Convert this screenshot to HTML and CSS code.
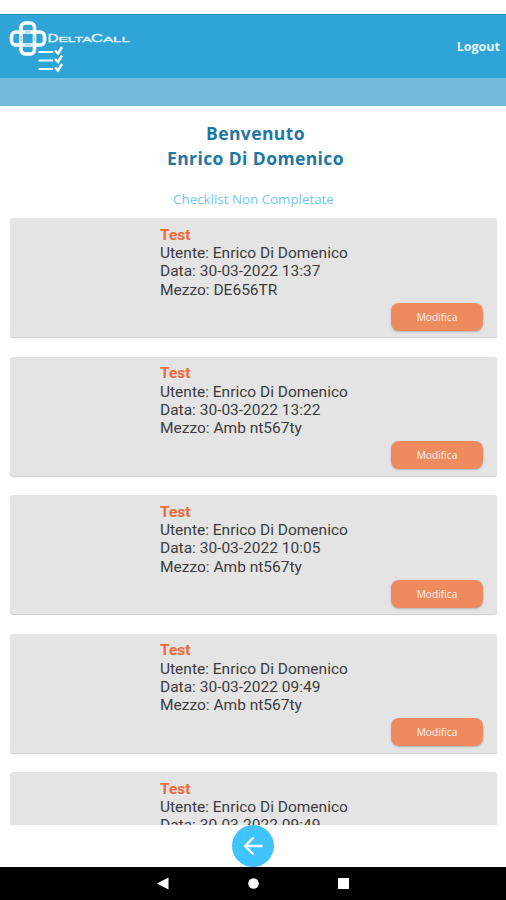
FILE: index.html
```html
<!DOCTYPE html>
<html lang="it">
<head>
<meta charset="utf-8">
<meta name="viewport" content="width=device-width">
<title>DeltaCall</title>
<link rel="stylesheet" href="styles.css">
</head>
<body>
<div class="app">
  <header class="header">
    <svg class="logo" width="126" height="58" viewBox="0 0 126 58" fill="none" stroke="#fff">
      <g stroke-width="3.6">
        <rect x="13" y="6" width="13.500" height="31" rx="4.5"/>
        <rect x="3.500" y="15" width="33" height="13" rx="4.5"/>
      </g>
      <path d="M17 15h5.500M17 28h5.500M13 19v5M26.500 19v5" stroke="#a5d6ee" stroke-width="1.500"/>
      <g class="logo-text" fill="#e4f4fc" stroke="#e4f4fc" stroke-width=".3">
        <text x="39.500" y="24.500" font-size="10" textLength="11" lengthAdjust="spacingAndGlyphs">D</text>
        <text x="50.500" y="24.500" font-size="8" textLength="33" lengthAdjust="spacingAndGlyphs">ELTA</text>
        <text x="83" y="24.500" font-size="10" textLength="12" lengthAdjust="spacingAndGlyphs">C</text>
        <text x="95" y="24.500" font-size="8" textLength="27" lengthAdjust="spacingAndGlyphs">ALL</text>
      </g>
      <path d="M30.500 35h14.500M30.500 43.500h14.500M30.500 52h14.500" stroke-width="2.200"/>
      <path d="M47 33.500l3 3 4-6.500M47 42l3 3 4-6.500M47 50.500l3 3 4-6.500" stroke-width="2.400"/>
    </svg>
    <span class="logout">Logout</span>
  </header>
  <div class="subbar"></div>
  <main class="content">
    <h1 class="welcome">Benvenuto<br>Enrico Di Domenico</h1>
    <p class="subtitle">Checklist Non Completate</p>
    <div class="list">
      <article class="card"><div class="info"><b>Test</b><span>Utente: Enrico Di Domenico</span><span>Data: 30-03-2022 13:37</span><span>Mezzo: DE656TR</span></div><button class="edit">Modifica</button></article>
      <article class="card"><div class="info"><b>Test</b><span>Utente: Enrico Di Domenico</span><span>Data: 30-03-2022 13:22</span><span>Mezzo: Amb nt567ty</span></div><button class="edit">Modifica</button></article>
      <article class="card"><div class="info"><b>Test</b><span>Utente: Enrico Di Domenico</span><span>Data: 30-03-2022 10:05</span><span>Mezzo: Amb nt567ty</span></div><button class="edit">Modifica</button></article>
      <article class="card"><div class="info"><b>Test</b><span>Utente: Enrico Di Domenico</span><span>Data: 30-03-2022 09:49</span><span>Mezzo: Amb nt567ty</span></div><button class="edit">Modifica</button></article>
      <article class="card"><div class="info"><b>Test</b><span>Utente: Enrico Di Domenico</span><span>Data: 30-03-2022 09:49</span></div></article>
    </div>
  </main>
  <div class="back-row">
    <svg width="42" height="42" viewBox="0 0 42 42"><circle cx="21" cy="21" r="21" fill="#40c4ff"/><path d="M30.500 21H13M21.500 12.500L13 21l8.500 8.500" fill="none" stroke="#fff" stroke-width="2.300"/></svg>
  </div>
  <nav class="navbar">
    <svg width="506" height="33" viewBox="0 0 506 33" fill="#fff"><path d="M157 16.500L168.500 10.500v12z"/><circle cx="253.500" cy="16.500" r="5.300"/><rect x="338" y="11" width="11" height="11"/></svg>
  </nav>
</div>
</body>
</html>
```
FILE: styles.css
```css
* { box-sizing: border-box; }
body { margin: 0; background: #fff; font-family: Roboto, sans-serif; }
.app { width: 506px; height: 900px; padding-top: 14px; display: flex; flex-direction: column; overflow: hidden; }
.header { height: 64px; flex: none; background: #2ea4d7; border-top: 1px solid #2292bd; display: flex; justify-content: space-between; align-items: flex-start; padding: 2px 6px 0 8px; }
.logo { display: block; }
.logo-text { font-family: "Liberation Sans", sans-serif; }
.logout { font: 700 12.500px/20px "Open Sans", sans-serif; color: #e9f7ff; margin-top: 20px; }
.subbar { height: 28px; flex: none; background: #72bbdb; }
.content { height: 719px; flex: none; overflow: hidden; }
.welcome { margin: 15px 0 0; padding-left: 5px; font: 700 17.500px/25px "Open Sans", sans-serif; color: #21779f; text-align: center; letter-spacing: .4px; }
.subtitle { margin: 18px 0 0; padding-left: 1px; font: 400 13.350px/20px "Open Sans", sans-serif; color: #72c7f6; text-align: center; }
.list { padding: 9.400px 9px 0 10px; display: flex; flex-direction: column; gap: 19.500px; }
.card { height: 119px; flex: none; background: #e4e4e4; border-radius: 3px; box-shadow: 0 1px 1px #cdcdcd; padding: 7.500px 14px 6.700px 150px; display: flex; flex-direction: column; justify-content: space-between; }
.info { display: flex; flex-direction: column; font-size: 15.500px; line-height: 18.300px; color: #3c3c3c; white-space: nowrap; }
.info b { color: #f2693a; font-weight: 700; }
.edit { align-self: flex-end; width: 92px; height: 28px; border: 0; padding: 0; border-radius: 8px; background: #ed8b5f; color: #fff1e8; font: 400 10.200px/28px "Open Sans", sans-serif; box-shadow: 0 1px 2px #8888; }
.back-row { height: 42px; flex: none; display: flex; justify-content: center; }
.navbar { height: 33px; flex: none; background: #000; }
.navbar svg { display: block; }
```
